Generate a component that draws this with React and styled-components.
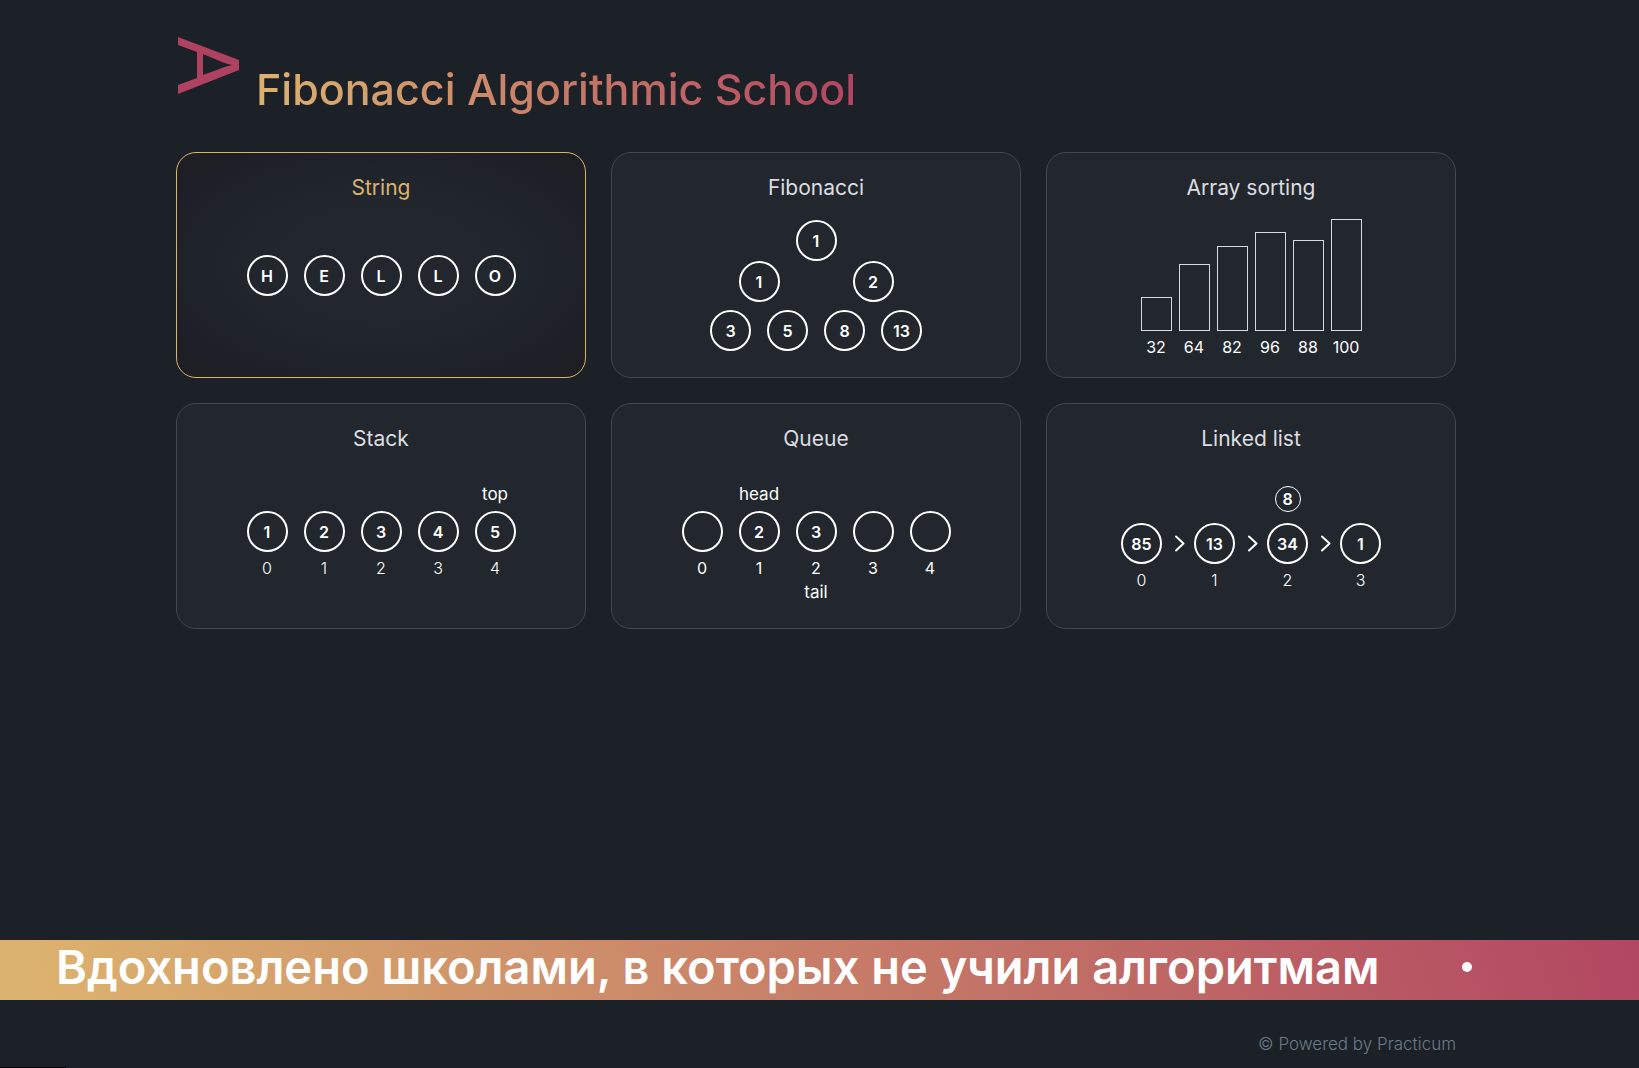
import React from "react";
import styled, { createGlobalStyle } from "styled-components";

const GlobalStyle = createGlobalStyle`
  *, *::before, *::after { box-sizing: border-box; }
  body {
    margin: 0;
    background: #1c2027;
    color: #fff;
    font-family: Inter, "Liberation Sans", sans-serif;
  }
  h1, h2, p { margin: 0; }
`;

const accent = "linear-gradient(252.62deg, #b04261 0%, #dcb36e 98.26%)";
const bannerAccent = "linear-gradient(252.62deg, #b04261 -4%, #dcb36e 98.26%)";

const Page = styled.div`
  min-height: 100vh;
  display: flex;
  flex-direction: column;
`;

const Container = styled.div`
  width: 100%;
  padding-right: 7px;
  & > * {
    max-width: 1280px;
    margin: 0 auto;
  }
`;

const Header = styled.header`
  display: flex;
  align-items: flex-start;
  gap: 16px;
  height: 152px;
  padding: 37px 2px 0;
`;

const Title = styled.h1`
  padding-top: 24px;
  font-size: 43px;
  line-height: 56px;
  font-weight: 500;
  background: ${accent};
  background-clip: text;
  -webkit-background-clip: text;
  color: transparent;
`;

const Cards = styled.main`
  display: grid;
  grid-template-columns: repeat(3, 1fr);
  gap: 25px;
`;

const Card = styled.a`
  display: flex;
  flex-direction: column;
  align-items: center;
  min-height: 226px;
  padding: 23px 16px 16px;
  border: 1px solid ${(p) => (p.$active ? "#dcb36e" : "#434850")};
  border-radius: 20px;
  background: ${(p) =>
    p.$active
      ? "radial-gradient(farthest-corner, #22272e 35%, #1d2029 78%, #1c1e20 98%)"
      : "#22272e"};
  color: #fff;
  text-decoration: none;
`;

const CardTitle = styled.h2`
  font-size: 21px;
  line-height: 24px;
  font-weight: 400;
  color: ${(p) => (p.$active ? "#dcb36e" : "#dcdde0")};
`;

const Figure = styled.div`
  display: flex;
  flex-direction: column;
  align-items: center;
  padding-top: ${(p) => p.$top}px;
`;

const Row = styled.div`
  display: flex;
  gap: ${(p) => p.$gap ?? 16}px;
  margin-top: ${(p) => p.$space ?? 0}px;
`;

const Node = styled.div`
  display: flex;
  flex-direction: column;
  align-items: center;
  width: 41px;
`;

const Circle = styled.span`
  display: flex;
  align-items: center;
  justify-content: center;
  flex: none;
  width: ${(p) => (p.$small ? 26 : 41)}px;
  height: ${(p) => (p.$small ? 26 : 41)}px;
  border: ${(p) => (p.$small ? 1 : 2)}px solid #fff;
  border-radius: 50%;
  font-size: 16px;
  line-height: 20px;
  font-weight: 600;
`;

const Slot = styled.span`
  display: flex;
  justify-content: center;
  height: ${(p) => p.$height}px;
  font-size: 17px;
  line-height: 20px;
  font-weight: 400;
`;

const Index = styled.span`
  margin-top: 6px;
  font-size: 16px;
  line-height: 20px;
  font-weight: ${(p) => (p.$light ? 300 : 400)};
`;

const Tail = styled(Index)`
  margin-top: 4px;
  font-size: 17px;
`;

const Bars = styled(Row)`
  align-items: flex-end;
`;

const BarItem = styled.div`
  display: flex;
  flex-direction: column;
  align-items: center;
  width: 31px;
`;

const Bar = styled.span`
  width: 100%;
  height: ${(p) => p.$height}px;
  border: 1px solid #d8d9da;
`;

const Arrow = styled.span`
  display: flex;
  align-items: center;
  justify-content: center;
  width: 32px;
  height: 41px;
  margin-top: 37px;
  padding-left: 4px;
`;

const Banner = styled.div`
  display: flex;
  align-items: center;
  height: 60px;
  margin-top: auto;
  padding: 0 0 6px 56px;
  gap: 83px;
  background: ${bannerAccent};
  font-size: 47px;
  line-height: 60px;
  font-weight: 600;
  white-space: nowrap;
`;

const Dot = styled.span`
  flex: none;
  width: 10px;
  height: 10px;
  border-radius: 50%;
  background: #fff;
`;

const Copyright = styled.p`
  height: 68px;
  padding-top: 34px;
  font-size: 17px;
  line-height: 20px;
  font-weight: 300;
  color: #6a7d88;
  text-align: right;
`;

const StatusEdge = styled.div`
  position: fixed;
  left: 0;
  bottom: 0;
  width: 66px;
  height: 1px;
  background: #000;
`;

function Logo() {
  return (
    <svg width="62" height="58" viewBox="0 0 62 58" aria-hidden="true">
      <path
        fill="#b04261"
        fillRule="evenodd"
        d="M0 0 61 23V33L0 57V48L19 41V15L0 8ZM25 17V38L44 31Q49 29 54 28Q49 27 44 25Z"
      />
    </svg>
  );
}

function Chevron() {
  return (
    <svg width="10" height="17" viewBox="0 0 10 17" aria-hidden="true">
      <path
        d="M1 1.5 8.5 8.5 1 15.5"
        fill="none"
        stroke="#fff"
        strokeWidth="2"
        strokeLinecap="round"
        strokeLinejoin="round"
      />
    </svg>
  );
}

const Circles = ({ values, gap, space }) => (
  <Row $gap={gap} $space={space}>
    {values.map((v, i) => (
      <Circle key={i}>{v}</Circle>
    ))}
  </Row>
);

const Queue = ({ values, head = {}, tail = {}, light }) => (
  <Row>
    {values.map((v, i) => (
      <Node key={i}>
        <Slot $height={27}>{head[i]}</Slot>
        <Circle>{v}</Circle>
        <Index $light={light}>{i}</Index>
        {tail[i] && <Tail>{tail[i]}</Tail>}
      </Node>
    ))}
  </Row>
);

const bars = [
  { value: 32, height: 34 },
  { value: 64, height: 67 },
  { value: 82, height: 85 },
  { value: 96, height: 99 },
  { value: 88, height: 91 },
  { value: 100, height: 112 },
];

const list = [85, 13, 34, 1];

const Tile = ({ title, href, active, top, children }) => (
  <Card href={href} $active={active}>
    <CardTitle $active={active}>{title}</CardTitle>
    <Figure $top={top}>{children}</Figure>
  </Card>
);

export default function App() {
  return (
    <Page>
      <GlobalStyle />
      <Container>
        <Header>
          <Logo />
          <Title>Fibonacci Algorithmic School</Title>
        </Header>
        <Cards>
          <Tile title="String" href="#recursion" active top={55}>
            <Circles values={["H", "E", "L", "L", "O"]} />
          </Tile>
          <Tile title="Fibonacci" href="#fibonacci" top={20}>
            <Circles values={[1]} />
            <Circles values={[1, 2]} gap={73} />
            <Circles values={[3, 5, 8, 13]} space={8} />
          </Tile>
          <Tile title="Array sorting" href="#sorting" top={19}>
            <Bars $gap={7}>
              {bars.map((b) => (
                <BarItem key={b.value}>
                  <Bar $height={b.height} />
                  <Index>{b.value}</Index>
                </BarItem>
              ))}
            </Bars>
          </Tile>
          <Tile title="Stack" href="#stack" top={33}>
            <Queue values={[1, 2, 3, 4, 5]} head={{ 4: "top" }} light />
          </Tile>
          <Tile title="Queue" href="#queue" top={33}>
            <Queue
              values={["", 2, 3, "", ""]}
              head={{ 1: "head" }}
              tail={{ 2: "tail" }}
            />
          </Tile>
          <Tile title="Linked list" href="#list" top={35}>
            <Row $gap={0}>
              {list.map((v, i) => (
                <React.Fragment key={v}>
                  {i > 0 && (
                    <Arrow>
                      <Chevron />
                    </Arrow>
                  )}
                  <Node>
                    <Slot $height={37}>
                      {i === 2 && <Circle $small>8</Circle>}
                    </Slot>
                    <Circle>{v}</Circle>
                    <Index $light>{i}</Index>
                  </Node>
                </React.Fragment>
              ))}
            </Row>
          </Tile>
        </Cards>
      </Container>
      <Banner>
        <span>Вдохновлено школами, в которых не учили алгоритмам</span>
        <Dot />
      </Banner>
      <Container>
        <Copyright>© Powered by Practicum</Copyright>
      </Container>
      <StatusEdge />
    </Page>
  );
}
